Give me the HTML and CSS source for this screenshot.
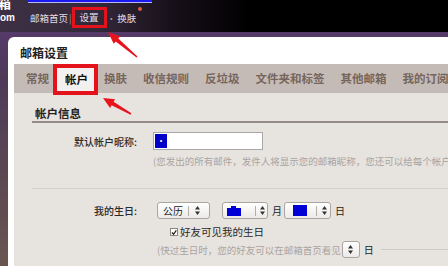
FILE: index.html
```html
<!DOCTYPE html>
<html lang="zh-CN">
<head>
    <meta charset="UTF-8">
    <title>邮箱设置</title>
    <link rel="stylesheet" href="styles.css">
</head>
<body>
    <div class="top">
        <div class="logo">
            <span class="logo-a">箱</span>
            <span class="logo-b">om</span>
        </div>
        <div class="nav">
            <div class="bluebar"></div>
            <div class="links">
                <span>邮箱首页</span>
                <span class="pipe">|</span>
                <span class="link-on">设置</span>
                <span class="dot">·</span>
                <span>换肤</span>
                <span class="new"></span>
            </div>
        </div>
    </div>

    <div class="frame">
        <div class="dialog">
            <div class="dialog-head">邮箱设置</div>
            <div class="panel">
                <div class="tabs">
                    <div class="tab">常规</div>
                    <div class="tab on">帐户</div>
                    <div class="tab">换肤</div>
                    <div class="tab">收信规则</div>
                    <div class="tab">反垃圾</div>
                    <div class="tab">文件夹和标签</div>
                    <div class="tab">其他邮箱</div>
                    <div class="tab">我的订阅</div>
                </div>
                <div class="content">
                    <div class="sec-title">帐户信息</div>

                    <div class="row row-nick">
                        <div class="label">默认帐户昵称:</div>
                        <div class="input"><span class="picked">·</span></div>
                        <div class="hint hint-1">(您发出的所有邮件，发件人将显示您的邮箱昵称，您还可以给每个帐户设置不同的昵称)</div>
                    </div>

                    <div class="sep"></div>

                    <div class="row row-birth">
                        <div class="label">我的生日:</div>
                        <div class="date">
                            <div class="sel sel-cal">
                                <span class="sel-val">公历</span>
                                <span class="sel-div"></span>
                                <svg class="arr" width="5" height="9" viewBox="0 0 5 9"><path d="M2.5 0L5 3.5H0zM2.5 9L0 5.5H5z" fill="#333"/></svg>
                            </div>
                            <div class="sel sel-month">
                                <svg width="14" height="10" viewBox="0 0 14 10"><path d="M0 2H4V0H9V2H14V10H0z" fill="#0000d6"/></svg>
                                <span class="sel-div"></span>
                                <svg class="arr" width="5" height="9" viewBox="0 0 5 9"><path d="M2.5 0L5 3.5H0zM2.5 9L0 5.5H5z" fill="#333"/></svg>
                            </div>
                            <span class="unit">月</span>
                            <div class="sel sel-day">
                                <span class="blue-box"></span>
                                <span class="sel-div"></span>
                                <svg class="arr" width="5" height="9" viewBox="0 0 5 9"><path d="M2.5 0L5 3.5H0zM2.5 9L0 5.5H5z" fill="#333"/></svg>
                            </div>
                            <span class="unit">日</span>
                        </div>
                        <div class="check-row">
                            <span class="check">
                                <svg width="7" height="7" viewBox="0 0 7 7"><path d="M1 3.5L3 5.5L6.2 1" fill="none" stroke="#222" stroke-width="1.4"/></svg>
                            </span>
                            <span>好友可见我的生日</span>
                        </div>
                        <div class="remind">
                            <span class="hint">(快过生日时，您的好友可以在邮箱首页看见</span>
                            <div class="sel sel-small">
                                <svg class="arr" width="5" height="9" viewBox="0 0 5 9"><path d="M2.5 0L5 3.5H0zM2.5 9L0 5.5H5z" fill="#333"/></svg>
                            </div>
                            <span class="unit">日</span>
                            <span class="rule"></span>
                        </div>
                    </div>
                </div>
            </div>
        </div>
    </div>

    <svg class="marks" width="448" height="266" viewBox="0 0 448 266">
        <polygon points="108,32 120.3,36.2 118.3,38.5 137.5,56.4 136.5,57.6 115.7,41.5 113.7,43.8" fill="#e8141c"/>
        <polygon points="103,98 115.1,99.2 113.6,101.8 131.4,113.3 130.6,114.7 111.6,105.2 110.1,107.9" fill="#e8141c"/>
    </svg>
</body>
</html>
```

FILE: styles.css
```css
* {
    margin: 0;
    padding: 0;
    box-sizing: border-box;
}

body {
    width: 448px;
    height: 266px;
    overflow: hidden;
    position: relative;
    background: #000;
    font-family: "Noto Sans CJK SC", "Noto Sans", sans-serif;
}

/* top bar */
.top {
    display: flex;
    height: 32px;
    background: linear-gradient(90deg, #3d3044 0%, #33283a 22%, #150e17 40%, #000 56%);
}

.logo {
    width: 28px;
    display: flex;
    flex-direction: column;
    color: #fff;
    font-weight: 700;
    overflow: hidden;
}

.logo-a {
    font-size: 13px;
    line-height: 13px;
    margin: -4px 0 0 -2px;
}

.logo-b {
    font-family: "Liberation Sans", sans-serif;
    font-size: 10px;
    line-height: 10px;
    margin-top: 4px;
}

.nav {
    display: flex;
    flex-direction: column;
}

.bluebar {
    width: 124px;
    height: 3px;
    background: #1a1af0;
    border-bottom: 1px solid #b8b8f0;
}

.links {
    display: flex;
    align-items: center;
    height: 29px;
    padding-left: 2px;
    font-size: 9.5px;
    color: #e2dde4;
}

.pipe {
    color: #9a909e;
    margin-left: 1px;
}

.link-on {
    border: 3px solid #e3121b;
    height: 21px;
    line-height: 15px;
    padding: 0 5px;
}

.dot {
    color: #9a909e;
    margin-right: 1px;
}

.new {
    width: 4px;
    height: 4px;
    border-radius: 50%;
    background: #e0583a;
    align-self: flex-start;
    margin: 4px 0 0 2px;
}

/* dialog */
.frame {
    height: 234px;
    padding: 5px 0 0 8px;
    background: linear-gradient(180deg, #563a6a 0%, #4e3a58 20%, #5b4752 60%, #6a5650 100%);
}

.dialog {
    height: 100%;
    background: #fff;
    border-top-left-radius: 6px;
    display: flex;
    flex-direction: column;
}

.dialog-head {
    height: 27px;
    padding: 5px 0 0 12px;
    font-size: 12px;
    line-height: 22px;
    font-weight: 700;
    color: #222;
}

.panel {
    flex: 1;
    margin-left: 6px;
    background: #e7e3df;
    display: flex;
    flex-direction: column;
}

.tabs {
    height: 29px;
    display: flex;
    align-items: flex-start;
    padding-left: 4px;
    background: #c5bbb6;
}

.tab {
    padding: 0 8px;
    font-size: 11.5px;
    line-height: 29px;
    font-weight: 700;
    color: #76655c;
    white-space: nowrap;
}

.tab.on {
    position: relative;
    z-index: 1;
    height: 31px;
    margin: 0 -2px 0 -4px;
    padding: 0 6px 0 8px;
    border: 4px solid #e3121b;
    line-height: 23px;
    background: #f3f1ef;
    color: #111;
}

.content {
    padding: 13px 0 0 18px;
}

.sec-title {
    padding-left: 3px;
    font-size: 11.5px;
    line-height: 15px;
    font-weight: 700;
    color: #222;
    border-bottom: 2px solid #958c86;
}

.row {
    display: grid;
    grid-template-columns: 105px 1fr;
    column-gap: 16px;
    align-items: center;
}

.row-nick {
    margin-top: 9px;
}

.label {
    text-align: right;
    font-size: 10px;
    font-weight: 500;
    color: #2a2a2a;
}

.input {
    width: 110px;
    height: 18px;
    padding: 1px;
    background: #fff;
    border: 1px solid #a7a7a7;
    display: flex;
}

.picked {
    width: 12px;
    background: #0000c8;
    color: #fff;
    font-size: 9px;
    line-height: 14px;
    text-align: center;
}

.hint {
    font-size: 9.5px;
    line-height: 14px;
    color: #aaa49f;
    white-space: nowrap;
}

.hint-1 {
    grid-column: 2;
    margin-top: 4px;
    overflow: hidden;
}

.sep {
    height: 1px;
    margin-top: 20px;
    background: #d4cfca;
}

.row-birth {
    margin-top: 13px;
}

.date {
    display: flex;
    align-items: center;
    padding-left: 4px;
}

.sel {
    height: 17px;
    display: flex;
    align-items: center;
    border: 1px solid #aaa5a1;
    border-radius: 3px;
    background: linear-gradient(#fff, #eceae8);
}

.sel-div {
    width: 1px;
    height: 10px;
    background: #b2aeaa;
}

.sel-cal {
    width: 53px;
    padding-left: 5px;
}

.sel-cal .sel-val {
    width: 25px;
    font-size: 10px;
    color: #222;
}

.sel-cal .arr {
    margin-left: 6px;
}

.sel-month {
    width: 46px;
    margin-left: 12px;
    padding-left: 4px;
}

.sel-month .sel-div {
    margin-left: 14px;
}

.sel-month .arr {
    margin-left: 4px;
}

.sel-day {
    width: 47px;
    margin-left: 2px;
    padding-left: 8px;
}

.blue-box {
    width: 14px;
    height: 11px;
    background: #0000d6;
}

.sel-day .sel-div {
    margin-left: 9px;
}

.sel-day .arr {
    margin-left: 5px;
}

.unit {
    font-size: 10px;
    color: #222;
    margin-left: 4px;
}

.check-row {
    grid-column: 2;
    display: flex;
    align-items: center;
    margin-top: 6px;
    padding-left: 17px;
    font-size: 10.5px;
    line-height: 14px;
    color: #2a2a2a;
}

.check {
    width: 8px;
    height: 8px;
    margin-right: 2px;
    border: 1px solid #8a8682;
    background: #fff;
    display: flex;
    align-items: center;
    justify-content: center;
}

.remind {
    grid-column: 2;
    display: flex;
    align-items: center;
    margin-top: 2px;
    padding-left: 4px;
}

.sel-small {
    width: 18px;
    justify-content: center;
    margin-left: 1px;
}

.rule {
    flex: 1;
    height: 1px;
    margin-left: 7px;
    background: #cfc9c4;
}

.marks {
    position: absolute;
    top: 0;
    left: 0;
    pointer-events: none;
}
```
